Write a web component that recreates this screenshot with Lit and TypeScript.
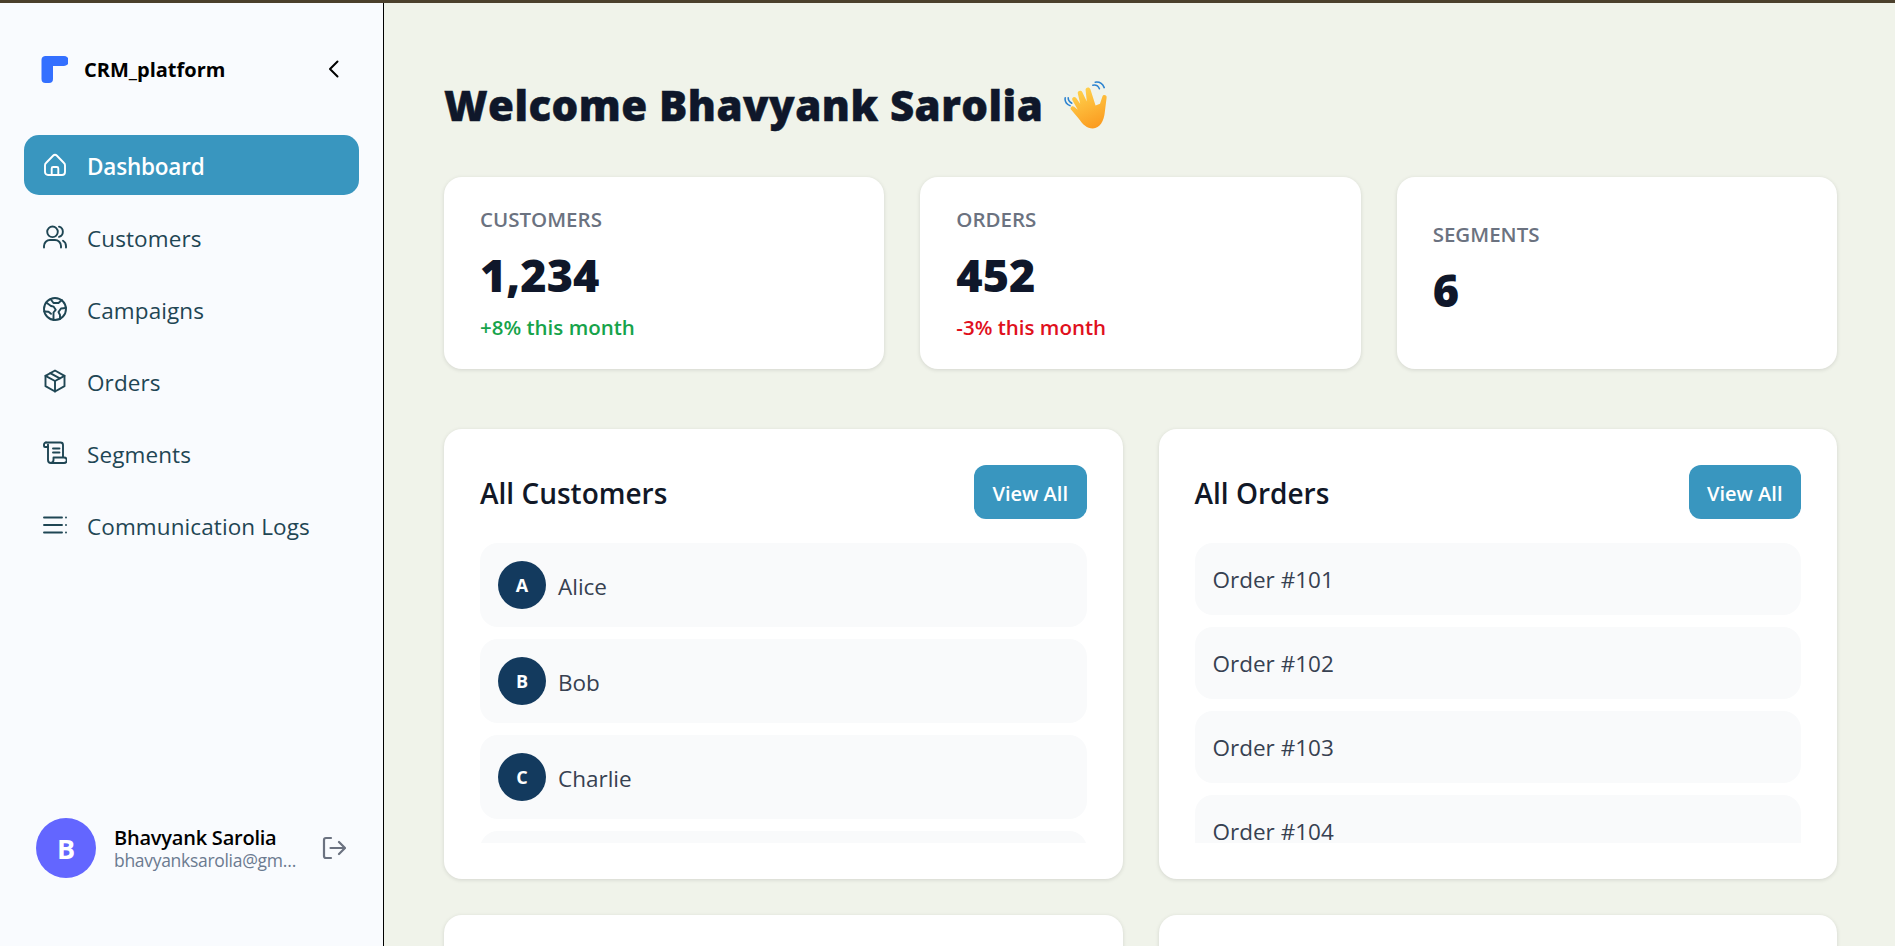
import { LitElement, html, css, svg } from "lit";
import { customElement } from "lit/decorators.js";

const icons: Record<string, unknown> = {
  home: svg`<path d="M3 10 10.300 2.500a2.400 2.400 0 0 1 3.400 0L21 10a3 3 0 0 1 1 2.200V19a3 3 0 0 1-3 3H5a3 3 0 0 1-3-3v-6.800A3 3 0 0 1 3 10z"/><path d="M8.700 22v-6.500a1.500 1.500 0 0 1 1.500-1.500h3.600a1.500 1.500 0 0 1 1.500 1.500V22"/>`,
  users: svg`<circle cx="9.500" cy="6.800" r="5.300"/><path d="M1 22.500v-1.500a6 6 0 0 1 6-6h5a6 6 0 0 1 6 6v1.500"/><path d="M16 1.700a5.300 5.300 0 0 1 0 10.200"/><path d="M23 22.500v-1.500a6 6 0 0 0-3-5.200"/>`,
  globe: svg`<circle cx="12" cy="12" r="11"/><path d="M3.200 5.500 8 9l2.700.7 2 3.100-2.200 2.700V23"/><path d="M7.500 2 10.500 6h5l3.300-3"/><path d="M23 11l-5 .5-2.500 3.500 1.500 3v4"/><path d="M1.200 14.500l4.300.3 2.500 2"/>`,
  box: svg`<path d="M12 1.500 21.500 6.800v10.400L12 22.500 2.500 17.200V6.800z"/><path d="M12 12l9.500-5.200M12 12v10.500M12 12 2.500 6.800"/><path d="M7.200 4.200l9.600 5.200"/>`,
  script: svg`<path d="M3 1.500H17.500A2.500 2.500 0 0 1 20 4v12"/><path d="M5 3.500V19a3 3 0 0 0 3 3h13a2.500 2.500 0 0 0 0-5.500H10.500V19a3 3 0 0 1-2.500 3"/><path d="M3 1.500a2 2 0 0 0-2 2V5a1 1 0 0 0 1 1h3"/><path d="M10 7.500h6.500M10 11.500h6.500"/>`,
  list: svg`<path d="M1 4.500h18M1 12h18M1 19.500h18"/><path d="M23 4.500h.01M23 12h.01M23 19.500h.01"/>`,
};

const NAV = [
  { label: "Dashboard", icon: "home", active: true },
  { label: "Customers", icon: "users" },
  { label: "Campaigns", icon: "globe" },
  { label: "Orders", icon: "box" },
  { label: "Segments", icon: "script" },
  { label: "Communication Logs", icon: "list" },
];

const STATS = [
  { label: "CUSTOMERS", value: "1,234", delta: "+8% this month", tone: "up" },
  { label: "ORDERS", value: "452", delta: "-3% this month", tone: "down" },
  { label: "SEGMENTS", value: "6" },
];

const CUSTOMERS = ["Alice", "Bob", "Charlie", "David"];
const ORDERS = ["Order #101", "Order #102", "Order #103", "Order #104"];

@customElement("app-root")
export class AppRoot extends LitElement {
  static styles = css`
    :host {
      display: flex;
      flex-direction: column;
      height: 100vh;
      overflow: hidden;
      font-family: "Open Sans", "Noto Sans", sans-serif;
      background: #f0f3ea;
    }
    .topline {
      height: 3px;
      flex-shrink: 0;
      background: #4b402c;
    }
    .shell {
      flex: 1;
      display: flex;
      min-height: 0;
    }
    .sidebar {
      width: 384px;
      box-sizing: border-box;
      flex-shrink: 0;
      display: flex;
      flex-direction: column;
      background: #f9fbfe;
      border-right: 1px solid #000;
      padding: 0 24px;
    }
    .brand {
      display: flex;
      align-items: center;
      height: 132px;
      padding: 0 13px 0 17px;
      box-sizing: border-box;
    }
    .logo {
      width: 27px;
      height: 27px;
      margin-right: 16px;
    }
    .brand-name {
      flex: 1;
      font-size: 20px;
      font-weight: 700;
      color: #000;
    }
    .chevron {
      width: 24px;
      height: 24px;
      fill: none;
      stroke: #000;
      stroke-width: 2;
      stroke-linecap: round;
      stroke-linejoin: round;
    }
    nav {
      display: flex;
      flex-direction: column;
      gap: 12px;
    }
    .nav-item {
      display: flex;
      align-items: center;
      gap: 20px;
      height: 60px;
      padding: 0 19px;
      border-radius: 15px;
      color: #1f4654;
      font-size: 22.5px;
      letter-spacing: 0.1px;
    }
    .nav-item span {
      padding-top: 2px;
    }
    .nav-item svg {
      width: 24px;
      height: 24px;
      fill: none;
      stroke: currentColor;
      stroke-width: 1.9;
      stroke-linecap: round;
      stroke-linejoin: round;
      flex-shrink: 0;
    }
    .nav-item.active {
      background: #3996bf;
      color: #fff;
      font-weight: 600;
      letter-spacing: -0.2px;
    }
    .user {
      margin-top: auto;
      margin-bottom: 68px;
      display: flex;
      align-items: center;
      padding-left: 12px;
    }
    .user-avatar {
      width: 60px;
      height: 60px;
      border-radius: 50%;
      background: #6366ff;
      color: #fff;
      font-size: 27px;
      font-weight: 700;
      display: flex;
      align-items: center;
      justify-content: center;
      flex-shrink: 0;
      margin-right: 18px;
    }
    .user-text {
      width: 184px;
      margin-right: 24px;
    }
    .user-name {
      font-size: 20px;
      font-weight: 600;
      color: #000;
      line-height: 25px;
      white-space: nowrap;
      letter-spacing: -0.22px;
    }
    .user-email {
      font-size: 17.5px;
      color: #6b7a90;
      line-height: 21px;
      white-space: nowrap;
      overflow: hidden;
      text-overflow: ellipsis;
      letter-spacing: -0.3px;
    }
    .logout {
      width: 24px;
      height: 24px;
      fill: none;
      stroke: #6b7280;
      stroke-width: 2.2;
      stroke-linecap: round;
      stroke-linejoin: round;
    }
    main {
      flex: 1;
      min-width: 0;
      box-sizing: border-box;
      padding: 60px 58px 0 60px;
      overflow: hidden;
    }
    h1 {
      margin: 0 0 36px;
      display: flex;
      align-items: center;
      gap: 21px;
      height: 78px;
      font-size: 42px;
      font-weight: 800;
      color: #0f172a;
      letter-spacing: 0.45px;
      -webkit-text-stroke: 0.5px #0f172a;
    }
    h1 span {
      padding-top: 4px;
    }
    h1 svg {
      width: 48px;
      height: 48px;
      margin-top: 6px;
    }
    .stats {
      display: grid;
      grid-template-columns: repeat(3, 1fr);
      gap: 36px;
      margin-bottom: 60px;
    }
    .stat,
    .panel {
      background: #fff;
      border-radius: 18px;
      box-shadow: 0 1px 4px rgba(0, 0, 0, 0.12);
    }
    .stat {
      box-sizing: border-box;
      height: 192px;
      padding: 0 36px;
      display: flex;
      flex-direction: column;
      justify-content: center;
    }
    .stat.solo {
      padding-bottom: 6px;
    }
    .stat-label {
      font-size: 20.5px;
      font-weight: 550;
      color: #6b7280;
      line-height: 30px;
    }
    .stat-value {
      font-size: 45px;
      font-weight: 800;
      color: #0f172a;
      line-height: 63px;
      margin-top: 9px;
    }
    .stat-delta {
      font-size: 20.5px;
      font-weight: 600;
      line-height: 30px;
      margin-top: 6px;
    }
    .up {
      color: #16a34a;
    }
    .down {
      color: #e0101c;
    }
    .panels {
      display: grid;
      grid-template-columns: repeat(2, 1fr);
      gap: 36px;
    }
    .panel {
      padding: 36px;
      height: 450px;
      box-sizing: border-box;
    }
    .panel-head {
      display: flex;
      align-items: center;
      justify-content: space-between;
      height: 54px;
      margin-bottom: 24px;
    }
    h2 {
      margin: 0;
      padding-top: 2px;
      font-size: 28px;
      font-weight: 600;
      color: #111827;
    }
    button {
      height: 54px;
      padding: 2px 18.5px 0;
      border: 0;
      border-radius: 12px;
      background: #3996bf;
      color: #fff;
      font: inherit;
      font-size: 20px;
      font-weight: 600;
    }
    .list {
      display: flex;
      flex-direction: column;
      gap: 12px;
      height: 300px;
      overflow: hidden;
    }
    .row {
      flex-shrink: 0;
      display: flex;
      align-items: center;
      gap: 12px;
      padding: 18px;
      border-radius: 18px;
      background: #f9fafb;
      color: #374151;
      font-size: 22.5px;
      line-height: 36px;
    }
    .row.plain {
      padding: 19px 18px 17px;
    }
    .row-avatar {
      width: 48px;
      height: 48px;
      border-radius: 50%;
      background: #133a5e;
      color: #fff;
      font-size: 18px;
      font-weight: 700;
      display: flex;
      align-items: center;
      justify-content: center;
    }
    .row-name {
      padding-top: 4px;
    }
  `;

  private renderWave() {
    return html`<svg viewBox="0 0 40 40" aria-hidden="true">
      <defs>
        <linearGradient id="hand" x1="0.3" y1="0" x2="0.7" y2="1">
          <stop offset="0" stop-color="#ffd24d" />
          <stop offset="1" stop-color="#fb9a1f" />
        </linearGradient>
      </defs>
      <path
        d="M30 19 32 13c.8-2.200 4-1.200 3.500 1l-1.500 12c-.6 7-4 13.500-10 13.500-5 0-8-3-12-8.500l-6-7c-1.500-1.800.7-4 2.500-2.600l3 2.600L7 16c-1-2 1.500-3.700 3-2l3.500 5-2-8.500c-.6-2.300 2.700-3.400 3.800-1.200l3.700 7.700-1-9.500c-.3-2.500 3.300-3 4-.6l3.500 11.100.8 2.500z"
        fill="url(#hand)"
      />
      <g fill="none" stroke="#2b82d0" stroke-width="1.3" stroke-linecap="round">
        <path d="M24 3.500c2.500-.5 4.500.5 5.500 3" />
        <path d="M26 1c3.500-.5 6 1 7.500 4.500" />
        <path d="M1 14c-.5 3 .5 5 4 6.500" />
        <path d="M3.500 14c0 2 1 3.500 3 4.500" />
      </g>
    </svg>`;
  }

  private renderPanel(title: string, rows: unknown) {
    return html`<section class="panel">
      <div class="panel-head">
        <h2>${title}</h2>
        <button>View All</button>
      </div>
      <div class="list">${rows}</div>
    </section>`;
  }

  render() {
    const customerRows = CUSTOMERS.map(
      (name) => html`<div class="row">
        <span class="row-avatar">${name[0]}</span>
        <span class="row-name">${name}</span>
      </div>`
    );
    const orderRows = ORDERS.map((o) => html`<div class="row plain">${o}</div>`);

    return html`
      <div class="topline"></div>
      <div class="shell">
        <aside class="sidebar">
          <div class="brand">
            <svg class="logo" viewBox="0 0 27 27" aria-hidden="true">
              <path
                d="M4 0h19a4 4 0 0 1 0 10h-11v13a4 4 0 0 1-4 4H4.500A4 4 0 0 1 .5 23V4A4 4 0 0 1 4 0z"
                fill="#3470ff"
              />
            </svg>
            <span class="brand-name">CRM_platform</span>
            <svg class="chevron" viewBox="0 0 24 24"><path d="M15.500 4.500 8 12l7.500 7.500" /></svg>
          </div>
          <nav>
            ${NAV.map(
              (item) => html`<div class="nav-item ${item.active ? "active" : ""}">
                <svg viewBox="0 0 24 24">${icons[item.icon]}</svg>
                <span>${item.label}</span>
              </div>`
            )}
          </nav>
          <div class="user">
            <div class="user-avatar">B</div>
            <div class="user-text">
              <div class="user-name">Bhavyank Sarolia</div>
              <div class="user-email">bhavyanksarolia@gmail.com</div>
            </div>
            <svg class="logout" viewBox="0 0 24 24">
              <path d="M9 2H4a2 2 0 0 0-2 2v16a2 2 0 0 0 2 2h5" />
              <path d="M8.500 12H23M17 6l6 6-6 6" />
            </svg>
          </div>
        </aside>
        <main>
          <h1><span>Welcome Bhavyank Sarolia</span>${this.renderWave()}</h1>
          <div class="stats">
            ${STATS.map(
              (s) => html`<div class="stat ${s.delta ? "" : "solo"}">
                <div class="stat-label">${s.label}</div>
                <div class="stat-value">${s.value}</div>
                ${s.delta ? html`<div class="stat-delta ${s.tone}">${s.delta}</div>` : ""}
              </div>`
            )}
          </div>
          <div class="panels">
            ${this.renderPanel("All Customers", customerRows)}
            ${this.renderPanel("All Orders", orderRows)}
            ${this.renderPanel("All Segments", "")}
            ${this.renderPanel("All Campaigns", "")}
          </div>
        </main>
      </div>
    `;
  }
}
